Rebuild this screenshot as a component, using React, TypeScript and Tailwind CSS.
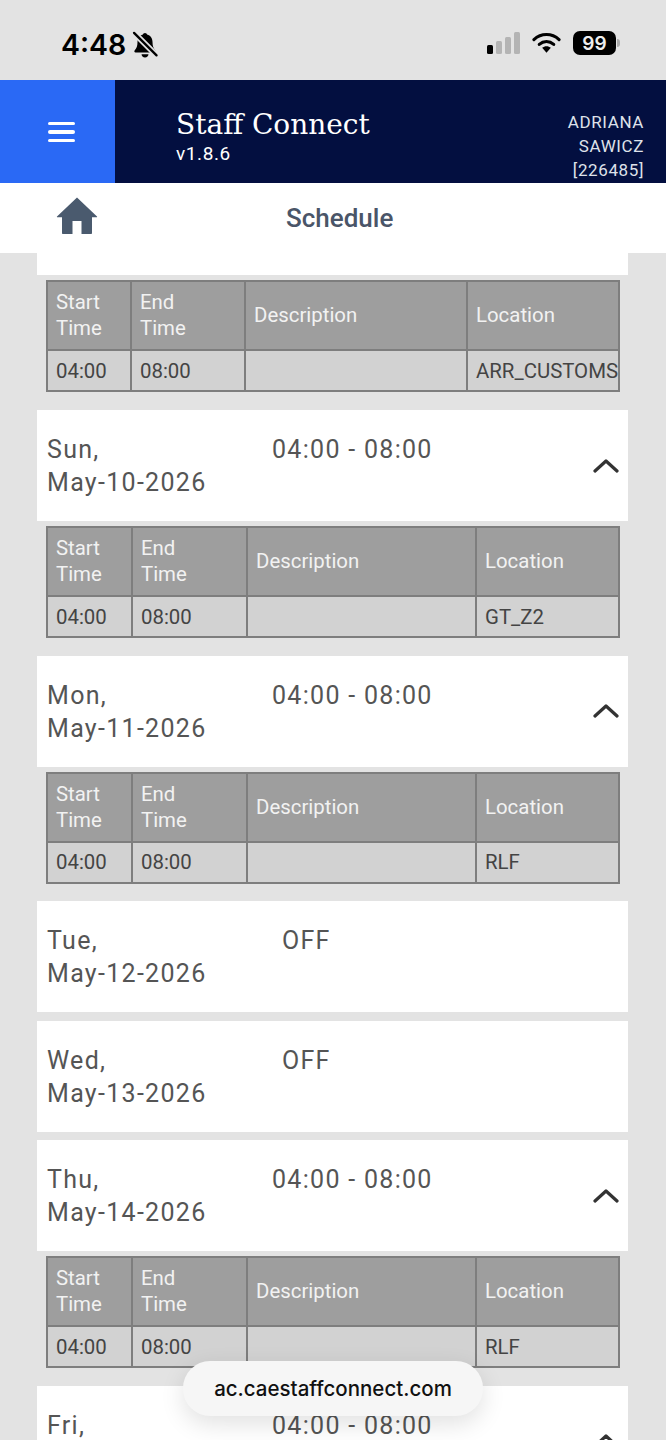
type Shift = { start: string; end: string; location: string };

type Day = {
  weekday: string;
  date: string;
  time?: string;
  shift?: Shift;
};

const days: Day[] = [
  { weekday: "Sun,", date: "May-10-2026", time: "04:00 - 08:00", shift: { start: "04:00", end: "08:00", location: "GT_Z2" } },
  { weekday: "Mon,", date: "May-11-2026", time: "04:00 - 08:00", shift: { start: "04:00", end: "08:00", location: "RLF" } },
  { weekday: "Tue,", date: "May-12-2026" },
  { weekday: "Wed,", date: "May-13-2026" },
  { weekday: "Thu,", date: "May-14-2026", time: "04:00 - 08:00", shift: { start: "04:00", end: "08:00", location: "RLF" } },
  { weekday: "Fri,", date: "May-15-2026", time: "04:00 - 08:00" },
];

function StatusBar() {
  return (
    <div className="flex h-20 items-start justify-between bg-[#e3e3e3] pl-[61px] pr-[46px] pt-[27px]">
      <div className="flex h-[35px] items-center gap-[5px]">
        <span className="font-['Inter',sans-serif] text-[28.500px] font-semibold leading-[35px] text-black">4:48</span>
        <svg width="28" height="30" viewBox="0 0 24 26">
          <path d="M12 2.500c1 0 1.700.7 1.800 1.500 3 .8 4.700 3.300 4.700 6.500 0 3.500.8 5.500 2.500 7.200.5.600.2 1.800-.8 1.800H3.800c-1 0-1.300-1.200-.8-1.800 1.700-1.700 2.500-3.700 2.500-7.200 0-3.200 1.700-5.700 4.700-6.500.1-.8.800-1.500 1.800-1.500z" fill="#000" />
          <path d="M9 21h6c0 1.700-1.300 2.800-3 2.800s-3-1.100-3-2.800z" fill="#000" />
          <path d="M2.500 2.500 22 22" stroke="#e3e3e3" strokeWidth="5" />
          <path d="M2.500 2.500 22 22" stroke="#000" strokeWidth="2" strokeLinecap="round" />
        </svg>
      </div>
      <div className="flex items-center gap-[12px] pt-[4px]">
        <div className="flex items-end gap-[3px]">
          <span className="h-[9px] w-[6px] rounded-[1.500px] bg-black" />
          <span className="h-[13px] w-[6px] rounded-[1.500px] bg-[#b4b4b4]" />
          <span className="h-[17px] w-[6px] rounded-[1.500px] bg-[#b4b4b4]" />
          <span className="h-[22px] w-[6px] rounded-[1.500px] bg-[#b4b4b4]" />
        </div>
        <svg width="29" height="22" viewBox="0 0 30 22">
          <path d="M2 7.500C9.500 .5 20.500 .5 28 7.500" fill="none" stroke="#000" strokeWidth="3.200" strokeLinecap="round" />
          <path d="M7.500 12.500c4.500-4 10.500-4 15 0" fill="none" stroke="#000" strokeWidth="3.200" strokeLinecap="round" />
          <path d="M10.500 16 15 21l4.500-5c-2.500-2.200-6.500-2.200-9 0z" fill="#000" />
        </svg>
        <div className="flex items-center gap-[1px]">
          <div className="flex h-[24px] w-[43px] items-center justify-center rounded-[7px] bg-black font-['Inter',sans-serif] text-[19px] font-semibold leading-none text-[#eeeeee]">
            99
          </div>
          <span className="h-[8px] w-[3px] rounded-r-full bg-[#a8a8a8]" />
        </div>
      </div>
    </div>
  );
}

function AppHeader() {
  return (
    <div className="flex h-[103px] bg-[#030f40] font-['Roboto',sans-serif] text-white">
      <div className="flex w-[115px] flex-col items-center justify-center gap-[5px] bg-[#2a69f5] pl-[8px] pt-[1px]">
        <span className="h-[3.500px] w-[27px] rounded-full bg-white" />
        <span className="h-[3.500px] w-[27px] rounded-full bg-white" />
        <span className="h-[3.500px] w-[27px] rounded-full bg-white" />
      </div>
      <div className="pl-[61px] pt-[27px]">
        <div className="font-['DejaVu_Serif',serif] text-[28px] leading-[36px]">Staff Connect</div>
        <div className="text-[19px] leading-[22px] tracking-[0.6px]">v1.8.6</div>
      </div>
      <div className="ml-auto pr-[22px] pt-[30px] text-right text-[17px] leading-[24px] tracking-[0.6px] text-[#dfe2ea]">
        ADRIANA
        <br />
        SAWICZ
        <br />
        [226485]
      </div>
    </div>
  );
}

function PageTitle() {
  return (
    <div className="flex h-[70px] bg-white font-['Roboto',sans-serif]">
      <svg width="42" height="38" viewBox="0 0 42 38" className="ml-[56px] mt-[14px]">
        <path d="M21 .5 41 19.500c.3.400.1.800-.4.800H36V36c0 .6-.4 1-1 1H25.500V24h-9v13H7c-.6 0-1-.4-1-1V20.300H1.400c-.5 0-.7-.4-.4-.8z" fill="#4a5a6e" />
      </svg>
      <div className="ml-[188px] pt-[20px] text-[26px] font-medium leading-[30px] text-[#4a5568]">Schedule</div>
    </div>
  );
}

function ShiftTable({ shift, widths }: { shift: Shift; widths: number[] }) {
  const head = "border-2 border-[#7e7e7e] bg-[#9e9e9e] px-[8px] pb-[1px] text-left text-[20.400px] font-normal leading-[26px] text-[#f2f2f2]";
  const cell = "h-[41px] border-2 border-[#7e7e7e] bg-[#d2d2d2] px-[8px] text-[20.400px] leading-[26px] text-[#444444]";
  return (
    <div className="px-[9px]">
      <table className="w-[572px] table-fixed border-collapse font-['Roboto',sans-serif]">
        <colgroup>
          {widths.map((w, i) => (
            <col key={i} style={{ width: w }} />
          ))}
        </colgroup>
        <tbody>
          <tr className="h-[69px]">
            <th className={head}>Start<br />Time</th>
            <th className={head}>End<br />Time</th>
            <th className={head}>Description</th>
            <th className={head}>Location</th>
          </tr>
          <tr>
            <td className={cell}>{shift.start}</td>
            <td className={cell}>{shift.end}</td>
            <td className={cell}></td>
            <td className={`${cell} whitespace-nowrap`}>{shift.location}</td>
          </tr>
        </tbody>
      </table>
    </div>
  );
}

function DayCard({ day }: { day: Day }) {
  return (
    <div className="flex h-[111px] bg-white font-['Roboto',sans-serif] text-[25px] tracking-[1.300px] text-[#555555]">
      <div className="w-[235px] pl-[10px] pt-[23px] leading-[33px]">
        {day.weekday}
        <br />
        {day.date}
      </div>
      {day.time ? (
        <>
          <div className="pt-[23px] leading-[33px]">{day.time}</div>
          <svg width="26" height="14" viewBox="0 0 26 14" className="ml-auto mr-[9px] self-center">
            <path d="M2 12 13 2l11 10" fill="none" stroke="#333333" strokeWidth="3.200" strokeLinecap="round" strokeLinejoin="round" />
          </svg>
        </>
      ) : (
        <div className="pl-[10px] pt-[23px] leading-[33px]">OFF</div>
      )}
    </div>
  );
}

export default function App() {
  return (
    <div className="relative h-[1440px] w-[666px] overflow-hidden bg-[#e3e3e3]">
      <StatusBar />
      <AppHeader />
      <PageTitle />
      <div className="mx-[37px] w-[591px]">
        <div className="h-[22px] bg-white" />
        <div className="mt-[5px]">
          <ShiftTable shift={{ start: "04:00", end: "08:00", location: "ARR_CUSTOMS" }} widths={[84, 114, 222, 152]} />
        </div>
        <div className="mt-[18px] flex flex-col">
          {days.map((day) => (
            <div key={day.date} className={day.shift ? "mb-[17.500px]" : "mb-[8.500px]"}>
              <DayCard day={day} />
              {day.shift && (
                <div className="mt-[5px]">
                  <ShiftTable shift={day.shift} widths={[85, 115, 229, 143]} />
                </div>
              )}
            </div>
          ))}
        </div>
      </div>
      <div className="absolute left-[183px] top-[1361px] flex h-[55px] w-[300px] items-center justify-center rounded-[27px] bg-[#f6f6f6] pt-[1px] font-['Inter',sans-serif] text-[20.500px] font-medium text-[#111111] shadow-[0_8px_24px_rgba(0,0,0,0.12)]">
        ac.caestaffconnect.com
      </div>
    </div>
  );
}
